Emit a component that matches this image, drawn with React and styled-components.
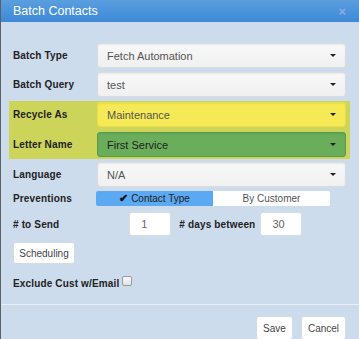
import React from "react";
import styled, { createGlobalStyle } from "styled-components";

const Global = createGlobalStyle`
  html, body { margin: 0; padding: 0; }
  body { font-family: "Liberation Sans", Arial, sans-serif; background: #cddced; }
`;

const Dialog = styled.div`
  width: 359px;
  height: 339px;
  overflow: hidden;
  background: #cddced;
  border-left: 1px solid #5b5f66;
  box-sizing: border-box;
  display: flex;
  flex-direction: column;
  & > * { flex: none; }
`;

const Header = styled.div`
  height: 22px;
  background: linear-gradient(#5a9edd, #3d89d9);
  display: flex;
  align-items: center;
  justify-content: space-between;
  padding: 0 13px 0 12px;
  color: #fff;
  font-size: 12.5px;
`;

const Close = styled.span`
  color: #86afdc;
  font-size: 13px;
  font-weight: bold;
  line-height: 1;
`;

const Body = styled.div`
  padding: 21px 12px 0 12px;
  display: flex;
  flex-direction: column;
`;

const Row = styled.div`
  display: grid;
  grid-template-columns: 84px 249px;
  align-items: center;
  height: ${(p) => p.$h || 25}px;
  margin-bottom: ${(p) => (p.$mb ?? 4)}px;
`;

const Label = styled.label`
  font-size: 10px;
  font-weight: bold;
  color: #222;
  letter-spacing: 0.15px;
  white-space: nowrap;
  margin-left: ${(p) => p.$ml || 0}px;
`;

const Highlight = styled.div`
  background: #cdd45a;
  margin: 0 -3px 3px -4px;
  padding: 1px 5px 2px 4px;
  display: flex;
  flex-direction: column;
  gap: 5px;
`;

const tones = {
  plain: { bg: "linear-gradient(#f8f8f8, #f0f0f0)", border: "#dcdcdc", color: "#555" },
  yellow: { bg: "#f5ea55", border: "#e9dd48", color: "#555" },
  green: { bg: "#6aad5b", border: "#579a49", color: "#222" },
};

const Select = styled.div`
  height: 25px;
  box-sizing: border-box;
  border: 1px solid ${(p) => tones[p.$tone].border};
  background: ${(p) => tones[p.$tone].bg};
  border-radius: 3px;
  box-shadow: inset 0 1px 2px rgba(0, 0, 0, 0.06);
  display: flex;
  align-items: center;
  justify-content: space-between;
  padding: 0 9px 0 9px;
  font-size: 11px;
  color: ${(p) => tones[p.$tone].color};
`;

const Caret = styled.span`
  width: 0;
  height: 0;
  border-left: 3.5px solid transparent;
  border-right: 3.5px solid transparent;
  border-top: 3.5px solid #222;
`;

const Toggle = styled.div`
  display: flex;
  height: 15px;
  width: 234px;
  margin-left: -1px;
`;

const Seg = styled.div`
  flex: 1;
  display: flex;
  align-items: center;
  justify-content: center;
  gap: 3px;
  font-size: 10px;
  color: ${(p) => (p.$active ? "#222" : "#555")};
  background: ${(p) => (p.$active ? "#5aa9f2" : "#fff")};
  border-radius: ${(p) => (p.$active ? "2px 0 0 2px" : "0 2px 2px 0")};
`;

const Check = styled.span`
  font-size: 11px;
  font-weight: bold;
  color: #111;
`;

const SendRow = styled.div`
  display: flex;
  align-items: center;
  height: 24px;
  margin-bottom: 6px;
`;

const NumInput = styled.div`
  width: 42px;
  height: 24px;
  box-sizing: border-box;
  background: #fff;
  border: 1px solid #d8dde3;
  border-radius: 3px;
  display: flex;
  align-items: center;
  padding-left: 11px;
  font-size: 11px;
  color: #666;
  margin-left: ${(p) => p.$ml}px;
`;

const Btn = styled.button`
  font-family: "Liberation Sans", Arial, sans-serif;
  font-size: 10px;
  color: #444;
  background: #fff;
  border: 1px solid #d5dbe2;
  border-radius: 3px;
  height: ${(p) => p.$h || 22}px;
  width: ${(p) => p.$w}px;
  padding: 0;
  cursor: pointer;
`;

const CheckRow = styled.div`
  display: flex;
  align-items: center;
  margin-top: 12px;
  height: 14px;
`;

const Box = styled.span`
  align-self: flex-start;
  width: 8px;
  height: 8px;
  margin-left: 3px;
  border: 1px solid #999;
  border-radius: 2px;
  background: linear-gradient(#fafafa, #e2e2e2);
`;

const Divider = styled.div`
  height: 1px;
  background: #e8eef5;
  margin-top: 14px;
`;

const Footer = styled.div`
  display: flex;
  justify-content: flex-end;
  gap: 8px;
  padding: 11px 13px 0 0;
`;

function Field({ label, value, tone = "plain", wrap = true }) {
  return (
    <Row $mb={wrap ? 4 : 0}>
      <Label>{label}</Label>
      <Select $tone={tone}>
        <span>{value}</span>
        <Caret />
      </Select>
    </Row>
  );
}

export default function App() {
  return (
    <Dialog>
      <Global />
      <Header>
        <span>Batch Contacts</span>
        <Close>×</Close>
      </Header>
      <Body>
        <Field label="Batch Type" value="Fetch Automation" />
        <Field label="Batch Query" value="test" />
        <Highlight>
          <Field label="Recycle As" value="Maintenance" tone="yellow" wrap={false} />
          <Field label="Letter Name" value="First Service" tone="green" wrap={false} />
        </Highlight>
        <Field label="Language" value="N/A" />
        <Row $h={15} $mb={6}>
          <Label>Preventions</Label>
          <Toggle>
            <Seg $active>
              <Check>✔</Check>
              <span>Contact Type</span>
            </Seg>
            <Seg>By Customer</Seg>
          </Toggle>
        </Row>
        <SendRow>
          <Label>#&nbsp;to Send</Label>
          <NumInput $ml={70}>1</NumInput>
          <Label $ml={8}>#&nbsp;days between</Label>
          <NumInput $ml={5}>30</NumInput>
        </SendRow>
        <div>
          <Btn $h={22} $w={62}>Scheduling</Btn>
        </div>
        <CheckRow>
          <Label>Exclude Cust w/Email</Label>
          <Box />
        </CheckRow>
      </Body>
      <Divider />
      <Footer>
        <Btn $h={24} $w={37}>Save</Btn>
        <Btn $h={24} $w={45}>Cancel</Btn>
      </Footer>
    </Dialog>
  );
}
